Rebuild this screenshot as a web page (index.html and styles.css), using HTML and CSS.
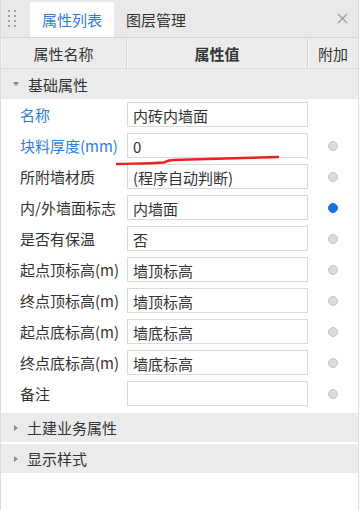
FILE: index.html
```html
<!DOCTYPE html>
<html lang="zh-CN">
<head>
  <meta charset="UTF-8" />
  <title>属性列表</title>
  <link rel="stylesheet" href="styles.css">
</head>
<body>
  <div class="panel">
    <div class="tabbar">
      <div class="grip">
        <span></span><span></span><span></span><span></span>
        <span></span><span></span><span></span><span></span>
      </div>
      <div class="tab active">属性列表</div>
      <div class="tab">图层管理</div>
      <div class="close">
        <svg width="11" height="11" viewBox="0 0 11 11"><path d="M1 1 L10 10 M10 1 L1 10" stroke="#9a9a9a" stroke-width="1.2" fill="none"/></svg>
      </div>
    </div>

    <div class="head">
      <div class="hcell">属性名称</div>
      <div class="hcell bold">属性值</div>
      <div class="hcell">附加</div>
    </div>

    <div class="group"><span class="arrow down"></span>基础属性</div>

    <div class="rows">
      <div class="row"><div class="label blue">名称</div><div class="val"><div class="box">内砖内墙面</div></div><div class="att"></div></div>
      <div class="row"><div class="label blue">块料厚度(mm)</div><div class="val"><div class="box">0</div></div><div class="att"><span class="radio"></span></div></div>
      <div class="row"><div class="label">所附墙材质</div><div class="val"><div class="box">(程序自动判断)</div></div><div class="att"><span class="radio"></span></div></div>
      <div class="row"><div class="label">内/外墙面标志</div><div class="val"><div class="box">内墙面</div></div><div class="att"><span class="radio on"></span></div></div>
      <div class="row"><div class="label">是否有保温</div><div class="val"><div class="box">否</div></div><div class="att"><span class="radio"></span></div></div>
      <div class="row"><div class="label">起点顶标高(m)</div><div class="val"><div class="box">墙顶标高</div></div><div class="att"><span class="radio"></span></div></div>
      <div class="row"><div class="label">终点顶标高(m)</div><div class="val"><div class="box">墙顶标高</div></div><div class="att"><span class="radio"></span></div></div>
      <div class="row"><div class="label">起点底标高(m)</div><div class="val"><div class="box">墙底标高</div></div><div class="att"><span class="radio"></span></div></div>
      <div class="row"><div class="label">终点底标高(m)</div><div class="val"><div class="box">墙底标高</div></div><div class="att"><span class="radio"></span></div></div>
      <div class="row"><div class="label">备注</div><div class="val"><div class="box"></div></div><div class="att"><span class="radio"></span></div></div>
    </div>

    <div class="group closed"><span class="arrow right"></span>土建业务属性</div>
    <div class="group closed"><span class="arrow right"></span>显示样式</div>

    <!-- hand-drawn mark over the thickness row -->
    <svg class="mark" width="170" height="14" viewBox="0 0 170 14">
      <path d="M2 11 C20 10.5 35 10.5 49 9.5 C52 8 53 7 58 7 C95 6 130 5 163 4" stroke="#e8231f" stroke-width="2.4" fill="none" stroke-linecap="round"/>
    </svg>
  </div>
</body>
</html>
```

FILE: styles.css
```css
body {
  margin: 0;
  background: #fff;
  font-family: "Noto Sans CJK SC", "Liberation Sans", sans-serif;
  font-size: 15px;
  color: #333;
}

.panel {
  position: relative;
  width: 357px;
  height: 510px;
  border-left: 1px solid #dcdcdc;
  border-right: 1px solid #dcdcdc;
  background: #fff;
}

.tabbar {
  display: flex;
  align-items: flex-end;
  height: 37px;
  background: #e9e9e9;
}

.grip {
  width: 29px;
  height: 37px;
  display: grid;
  grid-template-columns: 2px 2px;
  grid-auto-rows: 2px;
  column-gap: 4px;
  row-gap: 3px;
  padding: 10px 0 0 7px;
  box-sizing: border-box;
}

.grip span {
  background: #8c8c8c;
  border-radius: 1px;
}

.tab {
  height: 35px;
  line-height: 35px;
  padding: 0 12px;
}

.tab.active {
  background: #fff;
  color: #2f7de1;
}

.close {
  margin-left: auto;
  height: 37px;
  display: flex;
  align-items: center;
  padding-right: 10px;
  box-sizing: border-box;
}

.head {
  display: grid;
  grid-template-columns: 126px 181px 1fr;
  height: 30px;
  background: #ececec;
  border-top: 1px solid #d6d6d6;
  border-bottom: 1px solid #dedede;
}

.hcell {
  display: flex;
  align-items: center;
  justify-content: center;
  border-right: 1px solid #d4d4d4;
  box-shadow: inset 1px 0 0 #f7f7f7;
}

.hcell:last-child {
  border-right: none;
}

.bold {
  font-weight: bold;
}

.group {
  display: flex;
  align-items: center;
  height: 30px;
  background: #ebebeb;
}

.group.closed {
  height: 29px;
  margin-top: 2px;
}

.rows + .group {
  margin-top: 4px;
}

.arrow {
  width: 0;
  height: 0;
  margin: 0 9px 0 12px;
}

.arrow.down {
  border-left: 3px solid transparent;
  border-right: 3px solid transparent;
  border-top: 4px solid #8a8a8a;
}

.arrow.right {
  margin-left: 13px;
  border-top: 3px solid transparent;
  border-bottom: 3px solid transparent;
  border-left: 4px solid #8a8a8a;
}

.row {
  display: grid;
  grid-template-columns: 126px 181px 1fr;
  height: 31px;
  align-items: center;
}

.label {
  padding-left: 19px;
  white-space: nowrap;
}

.label.blue {
  color: #2f7de1;
}

.box {
  height: 25px;
  line-height: 25px;
  border: 1px solid #dadada;
  box-sizing: border-box;
  padding-left: 5px;
  background: #fff;
  white-space: nowrap;
}

.att {
  display: flex;
  justify-content: center;
}

.radio {
  width: 10px;
  height: 10px;
  border-radius: 50%;
  box-sizing: border-box;
  background: #dcdcdc;
  border: 1px solid #c4c4c4;
}

.radio.on {
  background: #1e6fe0;
  border-color: #1e6fe0;
}

.mark {
  position: absolute;
  left: 114px;
  top: 153px;
  pointer-events: none;
}
```
